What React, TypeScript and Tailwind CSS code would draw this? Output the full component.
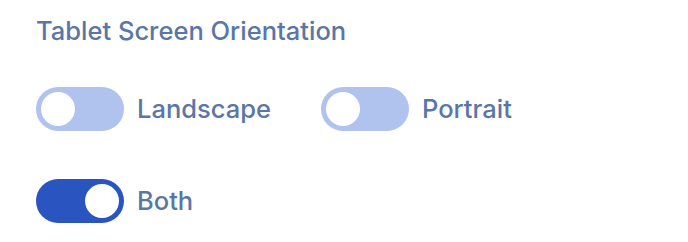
import { useState } from "react";

type Option = { key: string; label: string };

const OPTIONS: Option[][] = [
  [
    { key: "landscape", label: "Landscape" },
    { key: "portrait", label: "Portrait" },
  ],
  [{ key: "both", label: "Both" }],
];

function Toggle({ on }: { on: boolean }) {
  return (
    <span
      className={`flex h-[44px] w-[88px] shrink-0 items-center rounded-full px-[5px] ${
        on ? "justify-end bg-[#2a55c0]" : "justify-start bg-[#afc3ee]"
      }`}
    >
      <span className="h-[34px] w-[34px] rounded-full bg-white" />
    </span>
  );
}

export default function App() {
  const [selected, setSelected] = useState("both");

  return (
    <div
      className="h-[242px] w-[688px] bg-white px-[36px] pt-[15px] text-[#5a76a6]"
      style={{ fontFamily: "Inter, 'Noto Sans', sans-serif" }}
    >
      <h2 className="text-[25.5px] font-medium leading-[32px]">Tablet Screen Orientation</h2>

      <div className="mt-[40px] flex flex-col gap-[48px]">
        {OPTIONS.map((row, i) => (
          <div key={i} className="flex items-center gap-[50px]">
            {row.map((opt) => (
              <button
                key={opt.key}
                type="button"
                onClick={() => setSelected(opt.key)}
                className="flex items-center gap-[13px]"
              >
                <Toggle on={selected === opt.key} />
                <span className="text-[25.5px] font-medium">{opt.label}</span>
              </button>
            ))}
          </div>
        ))}
      </div>
    </div>
  );
}
